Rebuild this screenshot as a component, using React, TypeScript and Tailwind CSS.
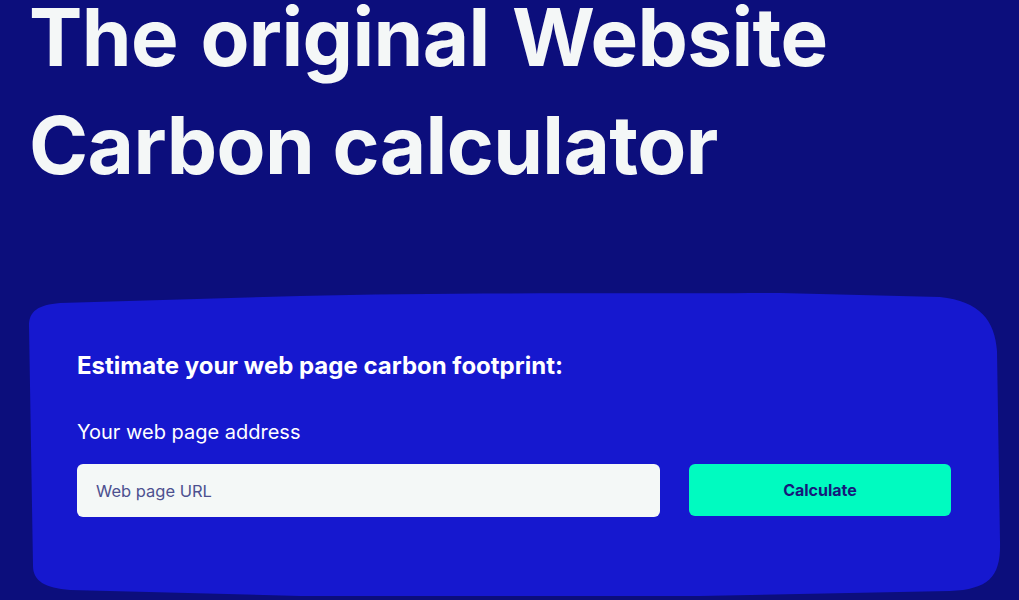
import React from "react";

function CardShape() {
  // Hand-drawn blob outline of the calculator panel (coords relative to the panel box at x=28, y=288)
  return (
    <svg
      className="absolute inset-0 h-full w-full"
      viewBox="0 0 974 312"
      preserveAspectRatio="none"
      aria-hidden="true"
    >
      <path
        d="M 1 37
           C 1 22, 10 16, 32 14
           L 272 7
           C 422 3, 622 5, 752 4
           L 912 8
           C 952 12, 967 32, 969 62
           L 972 252
           C 973 287, 962 300, 922 302
           L 672 307
           L 272 307
           L 42 301
           C 17 299, 5 292, 5 277
           Z"
        fill="#1618cf"
      />
    </svg>
  );
}

export default function App() {
  return (
    <div
      className="min-h-[600px] w-full overflow-hidden bg-[#0c0e7c] text-[#f4f7f7]"
      style={{ fontFamily: "Inter, 'Noto Sans', sans-serif" }}
    >
      <h1 className="mt-[-17px] pl-[29px] text-[80px] font-bold leading-[108px] tracking-[-0.6px]">
        <span className="[word-spacing:4px]">The original Website</span>
        <br />
        Carbon calculator
      </h1>

      <section className="relative ml-[28px] mt-[90px] h-[312px] w-[974px]">
        <CardShape />
        <div className="relative pl-[49px] pr-[51px] pt-[61px]">
          <h2 className="text-[24px] font-bold leading-[32px] text-white">
            Estimate your web page carbon footprint:
          </h2>
          <label
            htmlFor="url"
            className="mt-[36px] block text-[20px] leading-[28px] text-white"
          >
            Your web page address
          </label>
          <div className="mt-[18px] flex gap-[29px]">
            <input
              id="url"
              type="text"
              placeholder="Web page URL"
              className="h-[53px] w-[583px] rounded-[6px] bg-[#f4f8f7] px-[19px] text-[16.5px] text-[#1a1d6e] outline-none placeholder:text-[#4d5190]"
            />
            <button
              type="button"
              className="h-[52px] w-[262px] rounded-[6px] bg-[#00fbc0] text-[16px] font-bold text-[#16197a]"
            >
              Calculate
            </button>
          </div>
        </div>
      </section>
    </div>
  );
}
